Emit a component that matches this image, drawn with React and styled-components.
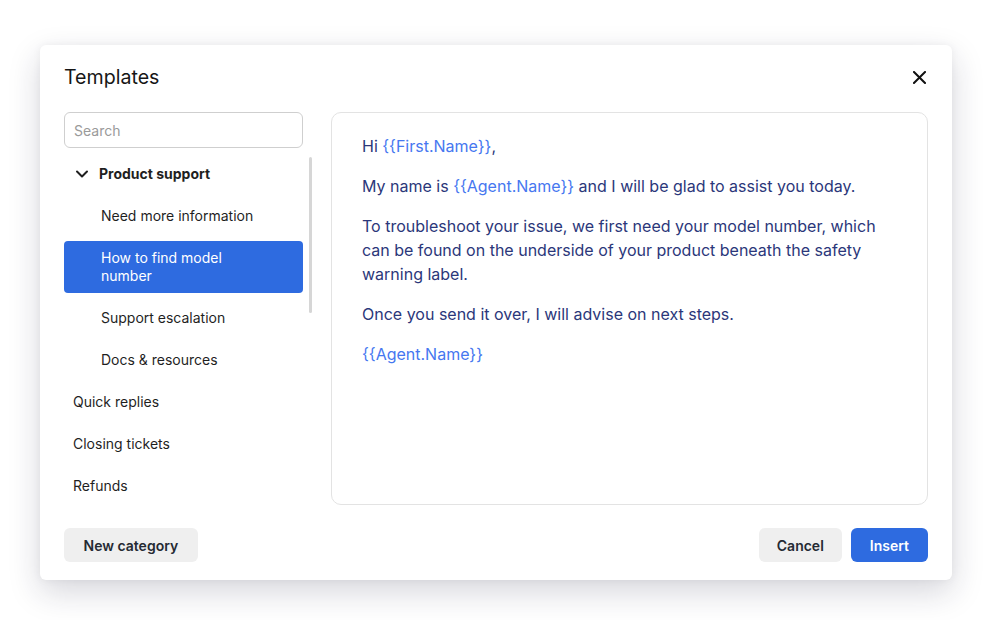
import React from "react";
import styled, { createGlobalStyle } from "styled-components";

const GlobalStyle = createGlobalStyle`
  html, body {
    margin: 0;
    background: #ffffff;
    font-family: "Inter", "Liberation Sans", sans-serif;
  }
`;

const Page = styled.div`
  padding: 45px 41px 40px 40px;
`;

const Dialog = styled.div`
  width: 912px;
  height: 535px;
  box-sizing: border-box;
  background: #fff;
  border-radius: 6px;
  box-shadow: 0 12px 32px rgba(30, 30, 60, 0.18), 0 0 8px rgba(0, 0, 0, 0.05);
  padding: 20px 24px 18px 24px;
  display: flex;
  flex-direction: column;
`;

const Header = styled.div`
  display: flex;
  align-items: center;
  justify-content: space-between;
  height: 24px;
`;

const Title = styled.h1`
  margin: 0;
  font-size: 19.6px;
  font-weight: 400;
  color: #161616;
  line-height: 24px;
`;

const CloseButton = styled.button`
  border: none;
  background: none;
  padding: 0;
  width: 14px;
  height: 14px;
  margin-right: 2px;
  display: flex;
  align-items: center;
  justify-content: center;
  cursor: pointer;
`;

const Body = styled.div`
  display: flex;
  margin-top: 23px;
  height: 393px;
`;

const Sidebar = styled.div`
  width: 248px;
  display: flex;
  flex-direction: column;
`;

const Search = styled.input`
  flex-shrink: 0;
  width: 239px;
  height: 36px;
  box-sizing: border-box;
  border: 1px solid #cfcfcf;
  border-radius: 6px;
  padding: 0 9px;
  font-family: inherit;
  font-size: 14px;
  color: #222;
  outline: none;
  &::placeholder {
    color: #9a9a9a;
  }
`;

const ListArea = styled.div`
  display: flex;
  margin-top: 5px;
  flex: 1;
  min-height: 0;
  overflow: hidden;
`;

const List = styled.div`
  width: 239px;
  flex-shrink: 0;
  display: flex;
  flex-direction: column;
`;

const Scrollbar = styled.div`
  flex-shrink: 0;
  width: 3px;
  margin-left: 6px;
  margin-top: 4px;
  height: 156px;
  border-radius: 2px;
  background: #d6d6d6;
`;

const Item = styled.div`
  flex-shrink: 0;
  margin: 4px 0;
  padding: 8px 47px 8px ${(p) => (p.$indent ? "37px" : "9px")};
  border-radius: 4px;
  font-size: 14px;
  line-height: 18px;
  color: ${(p) => (p.$active ? "#ffffff" : "#1f1f1f")};
  background: ${(p) => (p.$active ? "#2e6be0" : "transparent")};
  font-weight: ${(p) => (p.$bold ? 700 : 400)};
  display: flex;
  align-items: center;
  gap: 10px;
`;

const GroupRow = styled(Item)`
  padding-left: 11px;
`;

const Preview = styled.div`
  flex: 1;
  margin-left: 19px;
  border: 1px solid #e3e3e3;
  border-radius: 10px;
  padding: 21px 30px;
  color: #2b377a;
  font-size: 16px;
  line-height: 24px;
`;

const Para = styled.p`
  margin: 0 0 16px 0;
  max-width: 530px;
`;

const Var = styled.span`
  color: #4677f0;
`;

const Footer = styled.div`
  display: flex;
  justify-content: space-between;
  align-items: center;
  margin-top: auto;
`;

const Actions = styled.div`
  display: flex;
  gap: 9px;
`;

const Button = styled.button`
  height: 34px;
  padding: 0 ${(p) => p.$px || 18}px;
  border: none;
  border-radius: 6px;
  font-family: inherit;
  font-size: 14px;
  font-weight: 600;
  background: ${(p) => (p.$primary ? "#2e6be0" : "#efefef")};
  color: ${(p) => (p.$primary ? "#ffffff" : "#252a33")};
  cursor: pointer;
`;

function Chevron() {
  return (
    <svg width="14" height="14" viewBox="0 0 14 14" fill="none">
      <path d="M2 4.5 L7 9.5 L12 4.5" stroke="#1f1f1f" strokeWidth="2" strokeLinecap="round" strokeLinejoin="round" />
    </svg>
  );
}

export default function App() {
  return (
    <Page>
      <GlobalStyle />
      <Dialog>
        <Header>
          <Title>Templates</Title>
          <CloseButton aria-label="Close">
            <svg width="13" height="13" viewBox="0 0 13 13">
              <path d="M1 1 L12 12 M12 1 L1 12" stroke="#111" strokeWidth="2" strokeLinecap="square" />
            </svg>
          </CloseButton>
        </Header>
        <Body>
          <Sidebar>
            <Search placeholder="Search" />
            <ListArea>
              <List>
                <GroupRow $bold>
                  <Chevron />
                  Product support
                </GroupRow>
                <Item $indent>Need more information</Item>
                <Item $indent $active>How to find model number</Item>
                <Item $indent>Support escalation</Item>
                <Item $indent>Docs &amp; resources</Item>
                <Item>Quick replies</Item>
                <Item>Closing tickets</Item>
                <Item>Refunds</Item>
              </List>
              <Scrollbar />
            </ListArea>
          </Sidebar>
          <Preview>
            <Para>
              Hi <Var>{"{{First.Name}}"}</Var>,
            </Para>
            <Para>
              My name is <Var>{"{{Agent.Name}}"}</Var> and I will be glad to assist you today.
            </Para>
            <Para>
              To troubleshoot your issue, we first need your model number, which can be found on the
              underside of your product beneath the safety warning label.
            </Para>
            <Para>Once you send it over, I will advise on next steps.</Para>
            <Para>
              <Var>{"{{Agent.Name}}"}</Var>
            </Para>
          </Preview>
        </Body>
        <Footer>
          <Button $px={19.5}>New category</Button>
          <Actions>
            <Button>Cancel</Button>
            <Button $primary $px={19}>Insert</Button>
          </Actions>
        </Footer>
      </Dialog>
    </Page>
  );
}
